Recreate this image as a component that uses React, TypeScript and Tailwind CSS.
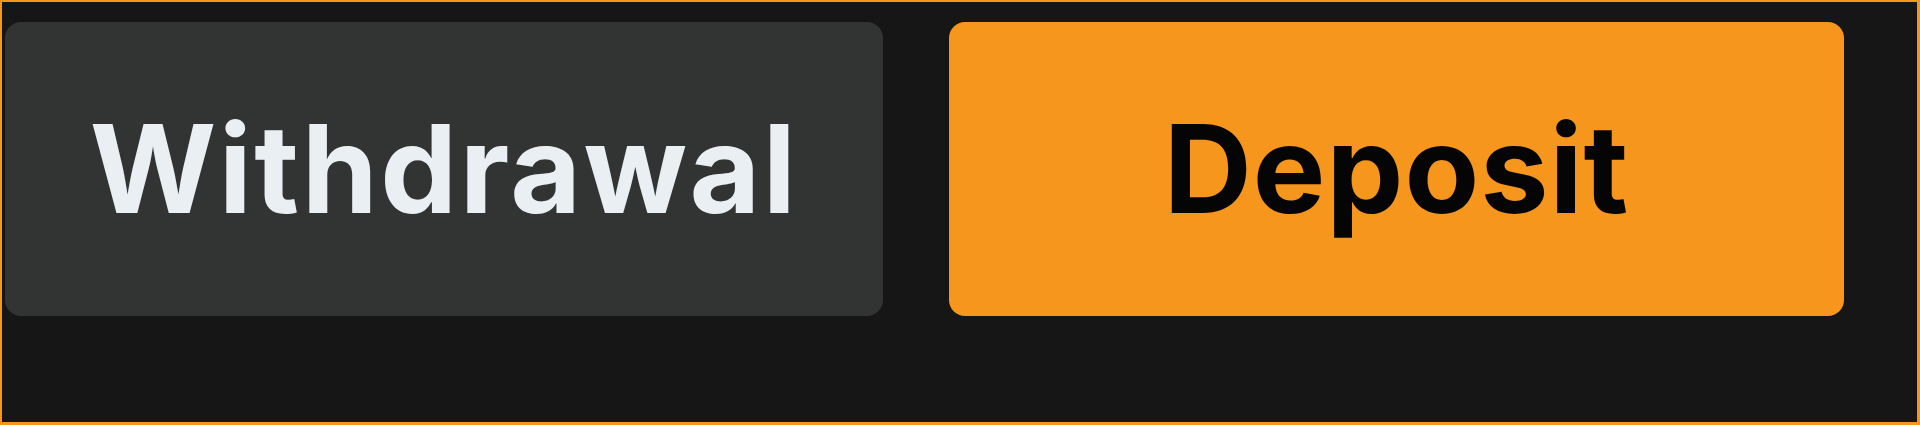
import React from "react";

export default function App() {
  return (
    <div className="w-[1920px] h-[425px] overflow-hidden bg-[#161616] border-t-2 border-l-2 border-r-[3px] border-b-[3px] border-[#f7961d] box-border">
      <div className="flex pt-[20px] pl-[3px] gap-[66px]">
        <button className="w-[878px] h-[294px] rounded-[16px] bg-[#323333] flex items-center justify-center">
          <span
            className="text-[122px] leading-none font-bold text-[#e9eff3] tracking-[2.5px]"
            style={{ fontFamily: "Inter, 'Noto Sans', sans-serif" }}
          >
            Withdrawal
          </span>
        </button>
        <button className="w-[895px] h-[294px] rounded-[16px] bg-[#f7961d] flex items-center justify-center">
          <span
            className="text-[122px] leading-none font-bold text-[#050505] tracking-[1px]"
            style={{ fontFamily: "Inter, 'Noto Sans', sans-serif" }}
          >
            Deposit
          </span>
        </button>
      </div>
    </div>
  );
}
